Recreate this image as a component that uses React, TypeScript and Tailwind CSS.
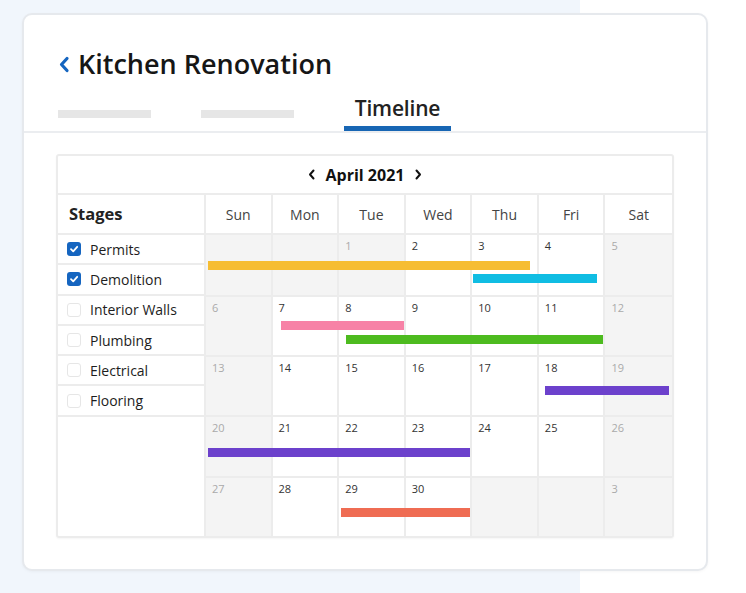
import React from 'react'

type Cell = { n?: number; muted?: boolean }
type Bar = { left: number; top: number; width: number; color: string }

const days = ['Sun', 'Mon', 'Tue', 'Wed', 'Thu', 'Fri', 'Sat']

const weeks: { height: string; cells: Cell[]; bars: Bar[] }[] = [
  {
    height: 'h-[62px]',
    cells: [{ muted: true }, { muted: true }, { n: 1, muted: true }, { n: 2 }, { n: 3 }, { n: 4 }, { n: 5, muted: true }],
    bars: [
      { left: 2, top: 26, width: 322, color: 'bg-[#f6bd33]' },
      { left: 267, top: 39, width: 124, color: 'bg-[#10bde3]' },
    ],
  },
  {
    height: 'h-[60px]',
    cells: [{ n: 6, muted: true }, { n: 7 }, { n: 8 }, { n: 9 }, { n: 10 }, { n: 11 }, { n: 12, muted: true }],
    bars: [
      { left: 75, top: 24, width: 123, color: 'bg-[#f782a6]' },
      { left: 140, top: 38, width: 257, color: 'bg-[#4dbb1f]' },
    ],
  },
  {
    height: 'h-[60px]',
    cells: [{ n: 13, muted: true }, { n: 14 }, { n: 15 }, { n: 16 }, { n: 17 }, { n: 18 }, { n: 19, muted: true }],
    bars: [{ left: 339, top: 29, width: 124, color: 'bg-[#6c41cc]' }],
  },
  {
    height: 'h-[61px]',
    cells: [{ n: 20, muted: true }, { n: 21 }, { n: 22 }, { n: 23 }, { n: 24 }, { n: 25 }, { n: 26, muted: true }],
    bars: [{ left: 2, top: 31, width: 262, color: 'bg-[#6c41cc]' }],
  },
  {
    height: 'h-[58px]',
    cells: [{ n: 27, muted: true }, { n: 28 }, { n: 29 }, { n: 30 }, { muted: true }, { muted: true }, { n: 3, muted: true }],
    bars: [{ left: 135, top: 30, width: 129, color: 'bg-[#ef6c53]' }],
  },
]

const stages = [
  { name: 'Permits', checked: true },
  { name: 'Demolition', checked: true },
  { name: 'Interior Walls', checked: false },
  { name: 'Plumbing', checked: false },
  { name: 'Electrical', checked: false },
  { name: 'Flooring', checked: false },
]

function Checkbox({ checked }: { checked: boolean }) {
  if (checked) {
    return (
      <span className="flex h-[14px] w-[14px] items-center justify-center rounded-[3px] bg-[#1565c0]">
        <svg width="10" height="10" viewBox="0 0 10 10" fill="none">
          <path d="M2 5.2 L4.2 7.3 L8.2 2.8" stroke="white" strokeWidth="1.8" strokeLinecap="round" strokeLinejoin="round" />
        </svg>
      </span>
    )
  }
  return <span className="h-[14px] w-[14px] rounded-[3px] border border-[#e6e6e6] bg-white" />
}

function Chevron({ dir }: { dir: 'left' | 'right' }) {
  return (
    <svg width="8" height="11" viewBox="0 0 8 11" fill="none">
      <path
        d={dir === 'left' ? 'M5.5 1.5 L2 5.5 L5.5 9.5' : 'M2.5 1.5 L6 5.5 L2.5 9.5'}
        stroke="#111"
        strokeWidth="2"
        strokeLinecap="round"
        strokeLinejoin="round"
      />
    </svg>
  )
}

export default function App() {
  return (
    <div
      className="h-[593px] w-[746px] overflow-hidden bg-[linear-gradient(to_right,#f1f6fc_580px,#ffffff_580px)] pt-[13px] pl-[22px]"
      style={{ fontFamily: '"Open Sans", Lato, sans-serif' }}
    >
      <div className="h-[558px] w-[686px] rounded-[10px] border-2 border-[#e6e9ed] bg-white shadow-[0_1px_3px_rgba(0,0,0,0.04)]">
        {/* Header */}
        <div className="border-b-2 border-[#ebedf0] pl-[34px] pt-[33px]">
          <div className="flex items-center gap-[7px]">
            <svg width="13" height="17" viewBox="0 0 13 17" fill="none">
              <path d="M9 2.5 L3.5 8.5 L9 14.5" stroke="#1565c0" strokeWidth="3.2" strokeLinecap="round" strokeLinejoin="round" />
            </svg>
            <h1 className="text-[27px] font-semibold leading-[32px] text-[#161616]">Kitchen Renovation</h1>
          </div>
          <div className="mt-[14px] flex gap-[50px]">
            <div className="w-[93px]">
              <div className="mt-[16px] h-[8px] bg-[#e6e6e6]" />
            </div>
            <div className="w-[93px]">
              <div className="mt-[16px] h-[8px] bg-[#e6e6e6]" />
            </div>
            <div className="flex w-[107px] flex-col items-center">
              <span className="h-[29px] text-[21px] font-semibold leading-[29px] tracking-[-0.2px] text-[#222]">Timeline</span>
              <div className="mt-[3px] h-[5px] w-full bg-[#1866b4]" />
            </div>
          </div>
        </div>

        {/* Calendar */}
        <div className="ml-[32px] mt-[21px] w-[618px] overflow-hidden rounded-[3px] border-2 border-[#ececec] shadow-[0_1px_2px_rgba(0,0,0,0.04)]">
          <div className="flex h-[39px] items-center justify-center gap-[10px] border-b-2 border-[#ececec]">
            <Chevron dir="left" />
            <span className="text-[16px] font-bold text-[#111]">April 2021</span>
            <Chevron dir="right" />
          </div>
          <div className="flex">
            <div className="w-[148px] shrink-0 border-r-2 border-[#ececec]">
              <div className="flex h-[40px] items-center border-b-2 border-[#ececec] pl-[11px] text-[16.5px] font-bold text-[#222]">
                Stages
              </div>
              {stages.map((s) => (
                <div key={s.name} className="flex h-[30.3px] items-center gap-[9px] border-b-2 border-[#ececec] pl-[9px] text-[14px] text-[#1d1d1d]">
                  <Checkbox checked={s.checked} />
                  <span>{s.name}</span>
                </div>
              ))}
            </div>
            <div className="flex-1">
              <div className="grid h-[40px] grid-cols-7 border-b-2 border-[#ececec]">
                {days.map((d, i) => (
                  <div
                    key={d}
                    className={`flex items-center justify-center text-[14px] text-[#444] ${i < 6 ? 'border-r-2 border-[#ececec]' : ''}`}
                  >
                    {d}
                  </div>
                ))}
              </div>
              {weeks.map((w, wi) => (
                <div key={wi} className={`relative grid grid-cols-7 ${w.height} ${wi < weeks.length - 1 ? 'border-b-2 border-[#ececec]' : ''}`}>
                  {w.cells.map((c, ci) => (
                    <div
                      key={ci}
                      className={`pl-[6px] pt-[3px] text-[11px] ${c.muted ? 'bg-[#f4f4f4] text-[#aaaaaa]' : 'bg-white text-[#333]'} ${ci < 6 ? 'border-r-2 border-[#ececec]' : ''}`}
                    >
                      {c.n}
                    </div>
                  ))}
                  {w.bars.map((b, bi) => (
                    <div
                      key={bi}
                      className={`absolute h-[9px] ${b.color}`}
                      style={{ left: b.left, top: b.top, width: b.width }}
                    />
                  ))}
                </div>
              ))}
            </div>
          </div>
        </div>
      </div>
    </div>
  )
}
